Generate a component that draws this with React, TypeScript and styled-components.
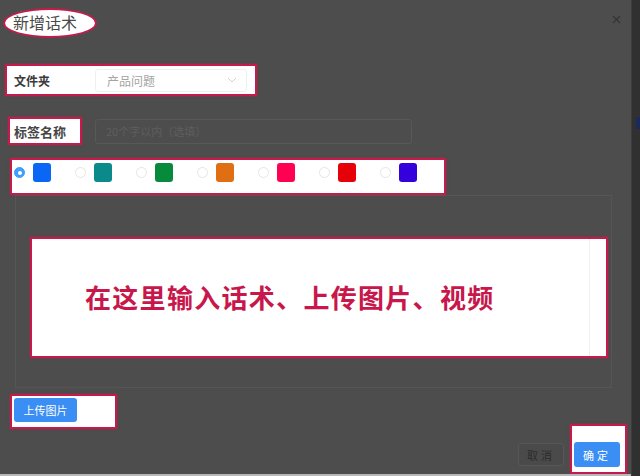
import styled, { createGlobalStyle } from "styled-components";

const Global = createGlobalStyle`
  html, body { margin: 0; padding: 0; }
  body {
    font-family: "Noto Sans CJK SC", "Noto Sans", sans-serif;
    background: #4d4d4d;
  }
`;

const MARK = "#c51a4c";

const colors = ["#0a66f5", "#0b8a8c", "#078a3c", "#e06e12", "#ff0052", "#e60008", "#3400dc"];

const App = () => {
  return (
    <>
      <Global />
      <Screen>
        <Main>
          <Header>
            <TitleMark>新增话术</TitleMark>
            <Close>
              <svg width="9" height="9" viewBox="0 0 9 9">
                <path d="M1 1 L8 8 M8 1 L1 8" stroke="#353535" strokeWidth="1.4" />
              </svg>
            </Close>
          </Header>

          <FolderMark>
            <FieldLabel>文件夹</FieldLabel>
            <Select>
              <span>产品问题</span>
              <svg width="10" height="6" viewBox="0 0 10 6">
                <path d="M1 1 L5 5 L9 1" stroke="#d2d2d2" strokeWidth="1" fill="none" />
              </svg>
            </Select>
          </FolderMark>

          <TagRow>
            <LabelMark>
              <FieldLabel>标签名称</FieldLabel>
            </LabelMark>
            <DimInput>20个字以内（选填）</DimInput>
          </TagRow>

          <ColorMark>
            {colors.map((c, i) => (
              <ColorItem key={c}>
                <Radio $on={i === 0} />
                <Swatch $c={c} />
              </ColorItem>
            ))}
          </ColorMark>

          <EditorPanel>
            <EditorMark>
              <Hint>在这里输入话术、上传图片、视频</Hint>
              <ScrollEdge />
            </EditorMark>
          </EditorPanel>

          <BottomArea>
            <UploadMark>
              <PrimaryButton $w={63} $h={24}>上传图片</PrimaryButton>
            </UploadMark>
            <Footer>
              <GhostButton>取消</GhostButton>
              <ConfirmMark>
                <PrimaryButton $w={46} $h={25} $spaced>确定</PrimaryButton>
              </ConfirmMark>
            </Footer>
          </BottomArea>
          <BottomLine />
        </Main>
        <RightStrip>
          <StripMark />
        </RightStrip>
      </Screen>
    </>
  );
};

export default App;

const Screen = styled.div`
  width: 640px;
  height: 476px;
  display: flex;
  overflow: hidden;
  background: #4d4d4d;
`;

const Main = styled.div`
  width: 632px;
  display: flex;
  flex-direction: column;
`;

const RightStrip = styled.div`
  width: 8px;
  background: #303030;
  border-left: 1px solid #3c3c3c;
  padding-top: 117px;
`;

const StripMark = styled.div`
  margin-left: 4px;
  width: 4px;
  height: 12px;
  background: #1b2a5a;
`;

const Header = styled.div`
  height: 46px;
  display: flex;
  align-items: flex-start;
  justify-content: space-between;
`;

const TitleMark = styled.div`
  margin: 8px 0 0 3px;
  width: 94px;
  height: 30px;
  box-sizing: border-box;
  border: 2.5px solid ${MARK};
  border-radius: 50%;
  background: #fff;
  color: #4a4a4a;
  font-size: 16px;
  line-height: 25px;
  padding-left: 8px;
`;

const Close = styled.div`
  margin: 15px 10px 0 0;
  width: 9px;
  height: 9px;
  display: flex;
`;

const Box = styled.div`
  box-sizing: border-box;
  border: 2px solid ${MARK};
  background: #fff;
  box-shadow: 0 0 2px rgba(197, 26, 76, 0.6);
`;

const FolderMark = styled(Box)`
  margin: 18px 0 0 5px;
  width: 252px;
  height: 32px;
  display: flex;
  align-items: center;
  padding-left: 7px;
`;

const FieldLabel = styled.span`
  font-size: 12px;
  font-weight: 700;
  color: #3a3a3a;
  width: 81px;
  flex-shrink: 0;
`;

const Select = styled.div`
  width: 152px;
  height: 23px;
  box-sizing: border-box;
  border: 1px solid #f0f0f0;
  border-radius: 3px;
  display: flex;
  align-items: center;
  justify-content: space-between;
  padding: 0 9px 0 11px;
  font-size: 12px;
  color: #a4a4a4;
`;

const TagRow = styled.div`
  margin-top: 21px;
  display: flex;
  align-items: center;
`;

const LabelMark = styled(Box)`
  margin-left: 8px;
  width: 74px;
  height: 28px;
  display: flex;
  align-items: center;
  padding-left: 4px;
  ${FieldLabel} {
    font-size: 13px;
    color: #454545;
  }
`;

const DimInput = styled.div`
  margin-left: 13px;
  width: 317px;
  height: 25px;
  box-sizing: border-box;
  border: 1px solid #585858;
  border-radius: 3px;
  display: flex;
  align-items: center;
  padding-left: 10px;
  font-size: 11px;
  color: #5e5e5e;
`;

const ColorMark = styled(Box)`
  margin: 13px 0 0 10px;
  width: 436px;
  height: 37px;
  display: flex;
  align-items: flex-start;
  padding: 3px 0 0 2px;
`;

const ColorItem = styled.div`
  width: 61px;
  display: flex;
  align-items: center;
  gap: 8px;
`;

const Radio = styled.span<{ $on: boolean }>`
  width: 11px;
  height: 11px;
  box-sizing: border-box;
  border-radius: 50%;
  border: 1px solid ${(p) => (p.$on ? "#409eff" : "#e6e6e6")};
  background: ${(p) => (p.$on ? "#409eff" : "#fff")};
  display: flex;
  align-items: center;
  justify-content: center;
  &::after {
    content: "";
    width: 4px;
    height: 4px;
    border-radius: 50%;
    background: #fff;
    display: ${(p) => (p.$on ? "block" : "none")};
  }
`;

const Swatch = styled.span<{ $c: string }>`
  width: 18px;
  height: 19px;
  border-radius: 3px;
  background: ${(p) => p.$c};
`;

const EditorPanel = styled.div`
  margin: 0 0 0 15px;
  width: 597px;
  height: 193px;
  box-sizing: border-box;
  border: 1px solid #555;
  border-top-color: #565656;
  padding: 41px 0 0 14px;
`;

const EditorMark = styled(Box)`
  width: 578px;
  height: 121px;
  display: flex;
  align-items: center;
  justify-content: space-between;
  padding-left: 53px;
`;

const Hint = styled.span`
  font-size: 26px;
  font-weight: 700;
  letter-spacing: 1.3px;
  color: #c8174b;
  margin-top: -2px;
`;

const ScrollEdge = styled.div`
  align-self: stretch;
  width: 16px;
  border-left: 1px solid #efefef;
`;

const BottomArea = styled.div`
  margin-top: 6px;
  height: 80px;
  display: flex;
  justify-content: space-between;
`;

const UploadMark = styled(Box)`
  margin-left: 10px;
  width: 107px;
  height: 35px;
  padding: 2px;
`;

const PrimaryButton = styled.div<{ $w: number; $h: number; $spaced?: boolean }>`
  width: ${(p) => p.$w}px;
  height: ${(p) => p.$h}px;
  border-radius: 3px;
  background: #3b8ef3;
  color: #fff;
  font-size: 11px;
  display: flex;
  align-items: center;
  justify-content: center;
  letter-spacing: ${(p) => (p.$spaced ? "3px" : "0")};
`;

const Footer = styled.div`
  display: flex;
  align-items: flex-end;
  gap: 6px;
  margin-right: 4px;
`;

const GhostButton = styled.div`
  width: 46px;
  height: 23px;
  box-sizing: border-box;
  border: 1px solid #575757;
  border-radius: 3px;
  background: #4a4a4a;
  color: #2c2c2c;
  font-size: 11px;
  letter-spacing: 3px;
  display: flex;
  align-items: center;
  justify-content: center;
  margin-bottom: 8px;
`;

const ConfirmMark = styled(Box)`
  width: 57px;
  height: 50px;
  display: flex;
  align-items: flex-end;
  padding: 0 0 5px 2px;
`;

const BottomLine = styled.div`
  height: 2px;
  background: #b8b8b8;
`;
